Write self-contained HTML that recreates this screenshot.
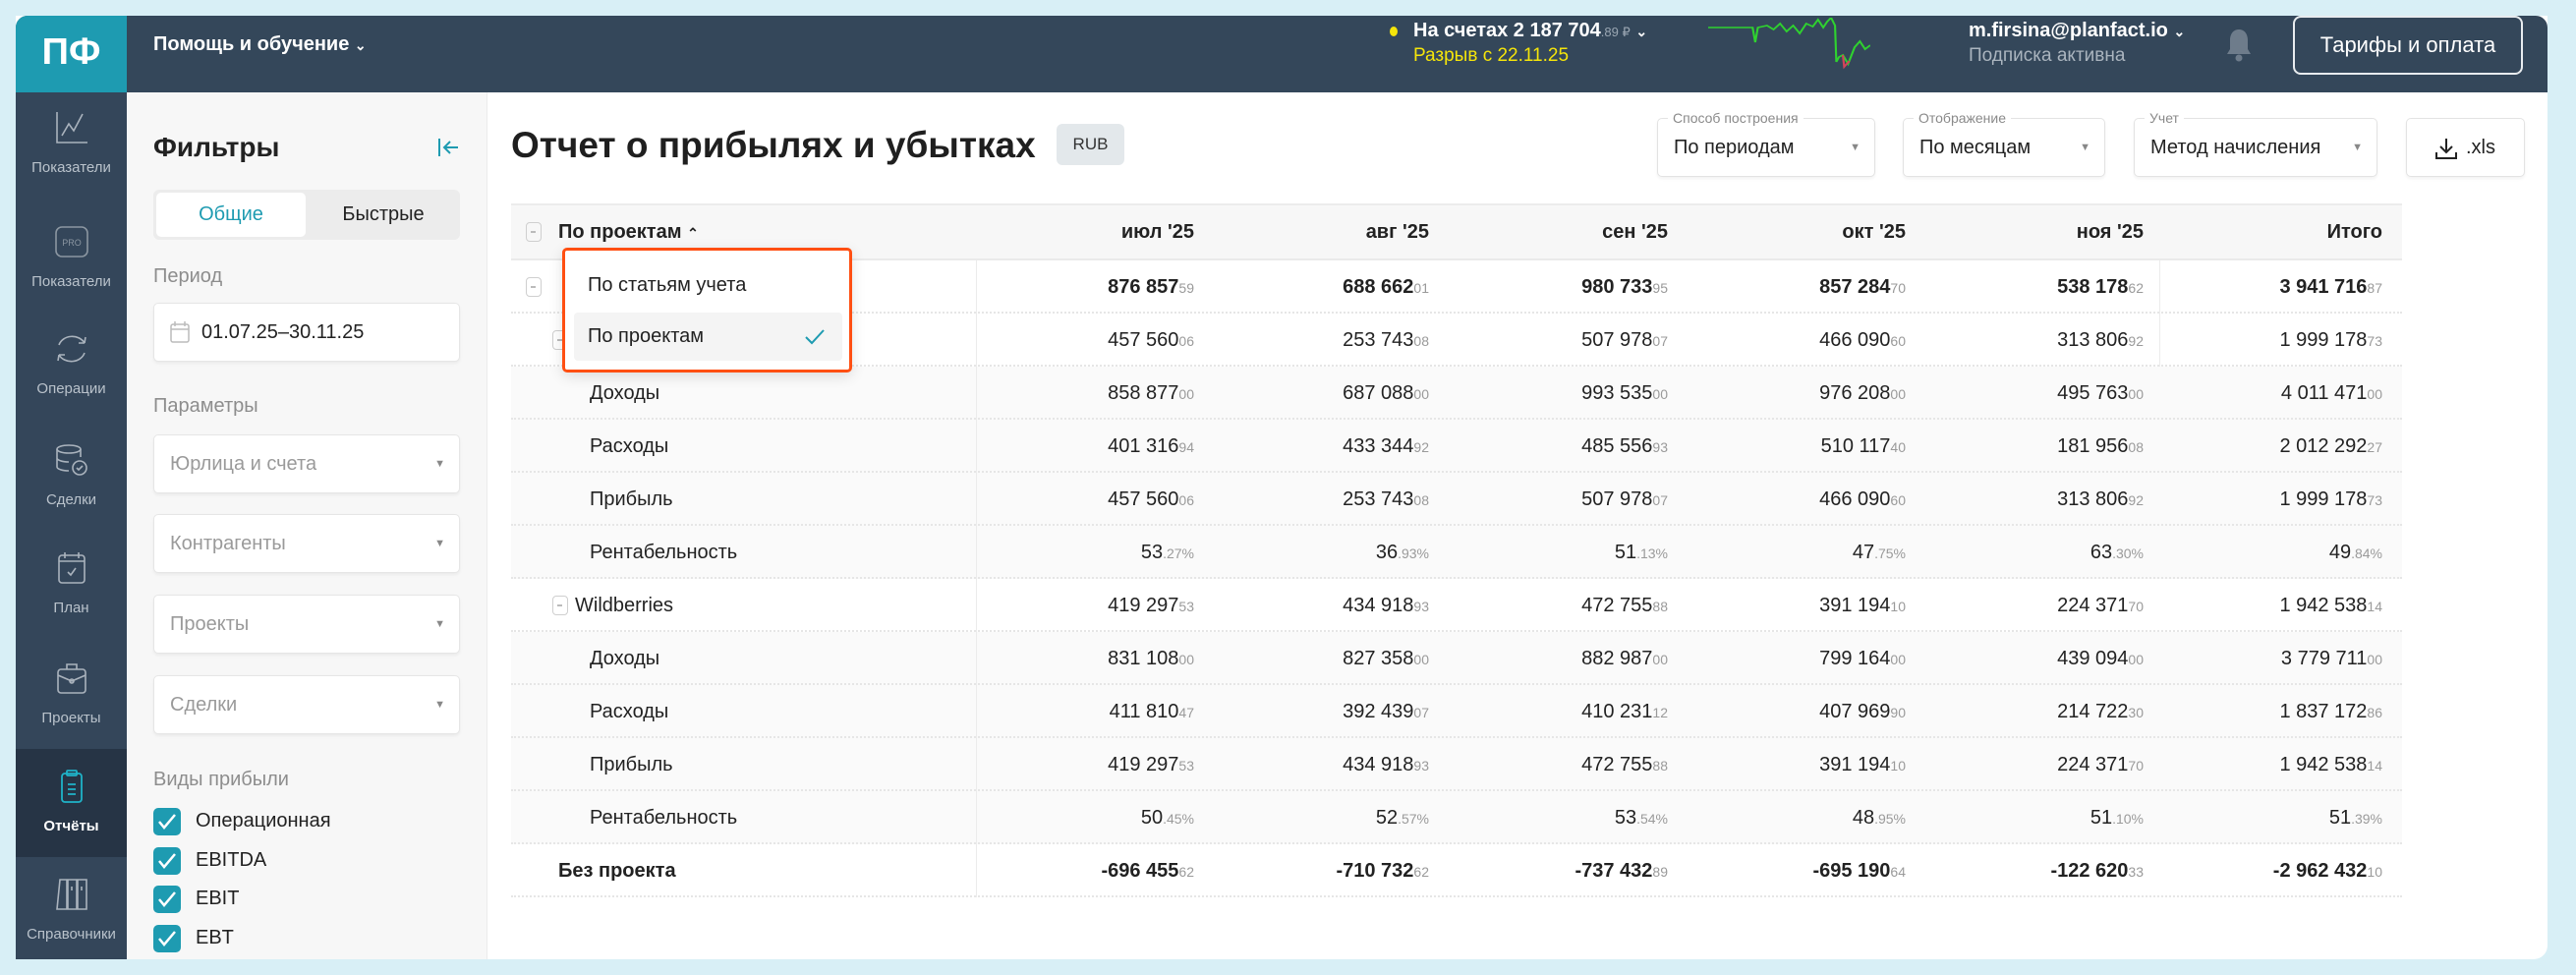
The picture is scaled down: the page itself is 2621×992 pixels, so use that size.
<!DOCTYPE html>
<html><head><meta charset="utf-8"><style>
*{box-sizing:border-box;margin:0;padding:0}
body{width:2621px;height:992px;background:#d8eff6;font-family:"Liberation Sans","Noto Sans CJK SC",sans-serif;color:#222;position:relative;overflow:hidden}
.abs{position:absolute}
#app{position:absolute;left:16px;top:16px;width:2576px;height:960px;background:#fff;border-radius:0 0 14px 14px;overflow:hidden}
#hdr{position:absolute;left:16px;top:16px;width:2576px;height:78px;background:#34475a;border-radius:12px 12px 0 0}
#logo{position:absolute;left:16px;top:16px;width:113px;height:78px;background:#1e9bb1;color:#fff;font-size:38px;font-weight:bold;text-align:center;line-height:74px;border-radius:12px 0 0 0}
#side{position:absolute;left:16px;top:94px;width:113px;height:882px;background:#34465a}
.si{position:absolute;left:16px;width:113px;text-align:center;color:#b9c2cb;font-size:15px}
.si svg{display:block;margin:0 auto 14px}
#filt{position:absolute;left:129px;top:94px;width:367px;height:882px;background:#f7f7f7;border-right:1px solid #ececec}
.lbl{position:absolute;left:156px;color:#8d8d8d;font-size:20px}
.box{position:absolute;left:156px;width:312px;height:60px;background:#fff;border:1px solid #e6e6e6;border-radius:5px;box-shadow:0 2px 3px rgba(0,0,0,.05);font-size:20px;color:#9a9a9a;line-height:58px;padding-left:16px}
.box .ar{position:absolute;right:14px;top:0;font-size:11px;color:#888}
.cb{position:absolute;left:156px;width:28px;height:28px;background:#1e9bb1;border-radius:5px}
.cb svg{position:absolute;left:4px;top:5px}
.cbl{position:absolute;left:199px;font-size:20px;color:#222}
.dd{position:absolute;top:120px;height:60px;border:1px solid #e3e3e3;border-radius:5px;background:#fff;font-size:20px;color:#222;line-height:58px;padding-left:16px;box-shadow:0 2px 3px rgba(0,0,0,.05)}
.dd .t{position:absolute;top:-10px;left:10px;background:#fff;padding:0 5px;font-size:14px;color:#8a8a8a;line-height:18px}
.dd .ar{position:absolute;right:14px;top:0;font-size:11px;color:#888}
#tbl{position:absolute;left:520px;top:207px;width:1924px}
.row{position:absolute;left:0;width:1924px;height:54px;border-bottom:2px dotted #e6e6e6;font-size:20px;line-height:54px}
.g{background:#fafafa}
.c{position:absolute;top:0;white-space:nowrap}
.c1{right:1229px}.c2{right:990px}.c3{right:747px}.c4{right:505px}.c5{right:263px}.c6{right:20px}
.c small{font-size:14px;color:#9a9a9a;font-weight:normal}
.b .c,.b .lb{font-weight:bold}
.lb{position:absolute;top:0}
.mk{position:absolute;width:16px;height:20px;border:1.5px solid #cfcfcf;border-radius:4px;top:17px}
.mk:after{content:"";position:absolute;left:4px;top:8px;width:5px;height:1.5px;background:#bbb}
</style></head><body>
<div id="app"></div>
<div id="hdr"></div>
<div id="logo">ПФ</div>
<div class="abs" style="left:156px;top:34px;color:#fff;font-size:20px;font-weight:bold">Помощь и обучение <span style="font-size:14px">&#8964;</span></div>
<div class="abs" style="left:1414px;top:27px;width:8px;height:10px;border-radius:50%;background:#f5e50a"></div>
<div class="abs" style="left:1438px;top:20px;color:#fff;font-size:20px;font-weight:bold">На счетах 2 187 704<span style="font-size:13px;color:#9aa6b2;font-weight:normal">.89 ₽</span> <span style="font-size:14px">&#8964;</span></div>
<div class="abs" style="left:1438px;top:46px;color:#f5e50a;font-size:19px">Разрыв с 22.11.25</div>
<svg class="abs" style="left:1738px;top:18px" width="165" height="60" viewBox="0 0 124 60" preserveAspectRatio="none"><polyline fill="none" stroke="#2fd22f" stroke-width="1.6" points="0,10 34,10 36,25 38,10 45,8 50,12 55,6 60,14 65,8 70,16 75,6 80,9 84,2 88,10 91,4 94,0 97,8 98,45 100,40 103,38 107,47 112,30 116,24 120,32 124,28"/><polyline fill="none" stroke="#d2455a" stroke-width="1.6" points="103,38 104,50 108,44"/></svg>
<div class="abs" style="left:2003px;top:20px;color:#fff;font-size:20px;font-weight:bold">m.firsina@planfact.io <span style="font-size:14px">&#8964;</span></div>
<div class="abs" style="left:2003px;top:46px;color:#aab4be;font-size:19px">Подписка активна</div>
<svg class="abs" style="left:2264px;top:28px" width="28" height="36" viewBox="0 0 28 36"><path d="M14 2c-6 0-9 5-9 11v9l-3 5h24l-3-5v-9c0-6-3-11-9-11z" fill="#6e7c8b"/><circle cx="14" cy="31" r="3.5" fill="#6e7c8b"/></svg>
<div class="abs" style="left:2333px;top:16px;width:234px;height:60px;border:2px solid #e8ecef;border-radius:8px;color:#fff;font-size:22px;text-align:center;line-height:56px">Тарифы и оплата</div>

<div id="side"></div>
<div class="si" style="top:112px"><svg width="36" height="36" viewBox="0 0 36 36" fill="none" stroke="#aab3bd" stroke-width="1.6"><path d="M3 2v31h31M8 26l7-12 5 7 9-17"/></svg>Показатели</div>
<div class="si" style="top:228px"><svg width="38" height="36" viewBox="0 0 38 36" fill="none" stroke="#8b96a1" stroke-width="1.6"><rect x="3" y="3" width="32" height="30" rx="6"/><text x="19" y="22" font-size="9" fill="#8b96a1" stroke="none" text-anchor="middle" font-family="Liberation Sans">PRO</text></svg>Показатели</div>
<div class="si" style="top:337px"><svg width="36" height="36" viewBox="0 0 36 36" fill="none" stroke="#aab3bd" stroke-width="1.6"><path d="M5 14a14 12 0 0 1 26-2M31 12l1-6M31 12l-6 0M31 22a14 12 0 0 1-26 2M5 24l-1 6M5 24l6 0"/></svg>Операции</div>
<div class="si" style="top:450px"><svg width="36" height="36" viewBox="0 0 36 36" fill="none" stroke="#aab3bd" stroke-width="1.6"><ellipse cx="15" cy="7" rx="12" ry="4"/><path d="M3 7v18c0 2 5 4 12 4M3 16c0 2 5 4 12 4M27 7v8"/><circle cx="26" cy="26" r="7"/><path d="M23 26l2 2 4-4"/></svg>Сделки</div>
<div class="si" style="top:560px"><svg width="36" height="36" viewBox="0 0 36 36" fill="none" stroke="#aab3bd" stroke-width="1.6"><rect x="5" y="5" width="26" height="28" rx="3"/><path d="M5 11h26M11 2v6M25 2v6M14 22l3 3 5-7"/></svg>План</div>
<div class="si" style="top:672px"><svg width="36" height="36" viewBox="0 0 36 36" fill="none" stroke="#aab3bd" stroke-width="1.6"><rect x="4" y="9" width="28" height="24" rx="3"/><path d="M13 9V4h10v5M4 15l14 6 14-6"/><circle cx="18" cy="21" r="2"/></svg>Проекты</div>
<div class="abs" style="left:16px;top:762px;width:113px;height:110px;background:#263445"></div>
<div class="si" style="top:782px;color:#fff;font-weight:bold"><svg width="36" height="36" viewBox="0 0 36 36" fill="none" stroke="#1fb3c8" stroke-width="1.8"><rect x="8" y="5" width="20" height="29" rx="3"/><rect x="13" y="2" width="10" height="5" rx="1"/><path d="M14 16h8M14 21h8M14 26h8"/></svg>Отчёты</div>
<div class="si" style="top:892px"><svg width="36" height="36" viewBox="0 0 36 36" fill="none" stroke="#aab3bd" stroke-width="1.6"><path d="M6 3h7v30H3zM14 3h9v30h-9zM24 3h9v30h-9zM18 10v4M28 10v4"/></svg>Справочники</div>

<div id="filt"></div>
<div class="abs" style="left:156px;top:134px;font-size:28px;font-weight:bold">Фильтры</div>
<svg class="abs" style="left:444px;top:138px" width="24" height="24" viewBox="0 0 24 24" fill="none" stroke="#1e9bb1" stroke-width="2"><path d="M3 3v18M22 12H8M14 6l-6 6 6 6"/></svg>
<div class="abs" style="left:156px;top:193px;width:312px;height:51px;background:#ececec;border-radius:6px"></div>
<div class="abs" style="left:159px;top:196px;width:152px;height:45px;background:#fff;border-radius:5px;color:#1e9bb1;font-size:20px;text-align:center;line-height:45px">Общие</div>
<div class="abs" style="left:315px;top:196px;width:150px;height:45px;font-size:20px;text-align:center;line-height:45px">Быстрые</div>
<div class="lbl" style="top:270px">Период</div>
<div class="box" style="top:308px;color:#222;padding-left:48px"><svg class="abs" style="left:16px;top:18px" width="20" height="22" viewBox="0 0 20 22" fill="none" stroke="#bbb" stroke-width="1.5"><rect x="1" y="3" width="18" height="18" rx="2"/><path d="M1 8h18M5 0v5M15 0v5"/></svg>01.07.25–30.11.25</div>
<div class="lbl" style="top:402px">Параметры</div>
<div class="box" style="top:442px">Юрлица и счета<span class="ar">▼</span></div>
<div class="box" style="top:523px">Контрагенты<span class="ar">▼</span></div>
<div class="box" style="top:605px">Проекты<span class="ar">▼</span></div>
<div class="box" style="top:687px">Сделки<span class="ar">▼</span></div>
<div class="lbl" style="top:782px">Виды прибыли</div>
<div class="cb" style="top:822px"><svg width="20" height="18" viewBox="0 0 20 18" fill="none" stroke="#fff" stroke-width="2.5"><path d="M2 9l5 6L18 2"/></svg></div><div class="cbl" style="top:824px">Операционная</div>
<div class="cb" style="top:862px"><svg width="20" height="18" viewBox="0 0 20 18" fill="none" stroke="#fff" stroke-width="2.5"><path d="M2 9l5 6L18 2"/></svg></div><div class="cbl" style="top:864px">EBITDA</div>
<div class="cb" style="top:901px"><svg width="20" height="18" viewBox="0 0 20 18" fill="none" stroke="#fff" stroke-width="2.5"><path d="M2 9l5 6L18 2"/></svg></div><div class="cbl" style="top:903px">EBIT</div>
<div class="cb" style="top:941px"><svg width="20" height="18" viewBox="0 0 20 18" fill="none" stroke="#fff" stroke-width="2.5"><path d="M2 9l5 6L18 2"/></svg></div><div class="cbl" style="top:943px">EBT</div>

<div class="abs" style="left:520px;top:127px;font-size:37px;font-weight:bold;color:#1f1f1f">Отчет о прибылях и убытках</div>
<div class="abs" style="left:1075px;top:126px;width:69px;height:42px;background:#e3e8eb;border-radius:6px;font-size:17px;text-align:center;line-height:42px;color:#333">RUB</div>

<div class="dd" style="left:1686px;width:222px"><span class="t">Способ построения</span>По периодам<span class="ar">▼</span></div>
<div class="dd" style="left:1936px;width:206px"><span class="t">Отображение</span>По месяцам<span class="ar">▼</span></div>
<div class="dd" style="left:2171px;width:248px"><span class="t">Учет</span>Метод начисления<span class="ar">▼</span></div>
<div class="dd" style="left:2448px;width:121px;padding-left:60px"><svg class="abs" style="left:28px;top:18px" width="24" height="24" viewBox="0 0 24 24" fill="none" stroke="#222" stroke-width="2"><path d="M12 2v14M6 10l6 6 6-6M2 16v6h20v-6"/></svg>.xls</div>

<div id="tbl">
<div class="row" style="top:0;height:58px;background:#f7f7f7;border-top:2px solid #ececec;border-bottom:2px solid #eaeaea;font-weight:bold;line-height:54px">
<span class="mk" style="left:15px"></span><span class="lb" style="left:48px">По проектам <span style="font-size:14px">&#8963;</span></span>
<span class="c c1">июл '25</span><span class="c c2">авг '25</span><span class="c c3">сен '25</span><span class="c c4">окт '25</span><span class="c c5">ноя '25</span><span class="c c6">Итого</span></div>

<div class="row b" style="top:58px"><span class="mk" style="left:15px"></span>
<span class="c c1">876 857<small>59</small></span><span class="c c2">688 662<small>01</small></span><span class="c c3">980 733<small>95</small></span><span class="c c4">857 284<small>70</small></span><span class="c c5">538 178<small>62</small></span><span class="c c6">3 941 716<small>87</small></span></div>
<div class="row" style="top:112px"><span class="mk" style="left:42px"></span>
<span class="c c1">457 560<small>06</small></span><span class="c c2">253 743<small>08</small></span><span class="c c3">507 978<small>07</small></span><span class="c c4">466 090<small>60</small></span><span class="c c5">313 806<small>92</small></span><span class="c c6">1 999 178<small>73</small></span></div>
<div class="row g" style="top:166px"><span class="lb" style="left:80px">Доходы</span>
<span class="c c1">858 877<small>00</small></span><span class="c c2">687 088<small>00</small></span><span class="c c3">993 535<small>00</small></span><span class="c c4">976 208<small>00</small></span><span class="c c5">495 763<small>00</small></span><span class="c c6">4 011 471<small>00</small></span></div>
<div class="row g" style="top:220px"><span class="lb" style="left:80px">Расходы</span>
<span class="c c1">401 316<small>94</small></span><span class="c c2">433 344<small>92</small></span><span class="c c3">485 556<small>93</small></span><span class="c c4">510 117<small>40</small></span><span class="c c5">181 956<small>08</small></span><span class="c c6">2 012 292<small>27</small></span></div>
<div class="row g" style="top:274px"><span class="lb" style="left:80px">Прибыль</span>
<span class="c c1">457 560<small>06</small></span><span class="c c2">253 743<small>08</small></span><span class="c c3">507 978<small>07</small></span><span class="c c4">466 090<small>60</small></span><span class="c c5">313 806<small>92</small></span><span class="c c6">1 999 178<small>73</small></span></div>
<div class="row g" style="top:328px"><span class="lb" style="left:80px">Рентабельность</span>
<span class="c c1">53<small>.27%</small></span><span class="c c2">36<small>.93%</small></span><span class="c c3">51<small>.13%</small></span><span class="c c4">47<small>.75%</small></span><span class="c c5">63<small>.30%</small></span><span class="c c6">49<small>.84%</small></span></div>
<div class="row" style="top:382px"><span class="mk" style="left:42px"></span><span class="lb" style="left:65px">Wildberries</span>
<span class="c c1">419 297<small>53</small></span><span class="c c2">434 918<small>93</small></span><span class="c c3">472 755<small>88</small></span><span class="c c4">391 194<small>10</small></span><span class="c c5">224 371<small>70</small></span><span class="c c6">1 942 538<small>14</small></span></div>
<div class="row g" style="top:436px"><span class="lb" style="left:80px">Доходы</span>
<span class="c c1">831 108<small>00</small></span><span class="c c2">827 358<small>00</small></span><span class="c c3">882 987<small>00</small></span><span class="c c4">799 164<small>00</small></span><span class="c c5">439 094<small>00</small></span><span class="c c6">3 779 711<small>00</small></span></div>
<div class="row g" style="top:490px"><span class="lb" style="left:80px">Расходы</span>
<span class="c c1">411 810<small>47</small></span><span class="c c2">392 439<small>07</small></span><span class="c c3">410 231<small>12</small></span><span class="c c4">407 969<small>90</small></span><span class="c c5">214 722<small>30</small></span><span class="c c6">1 837 172<small>86</small></span></div>
<div class="row g" style="top:544px"><span class="lb" style="left:80px">Прибыль</span>
<span class="c c1">419 297<small>53</small></span><span class="c c2">434 918<small>93</small></span><span class="c c3">472 755<small>88</small></span><span class="c c4">391 194<small>10</small></span><span class="c c5">224 371<small>70</small></span><span class="c c6">1 942 538<small>14</small></span></div>
<div class="row g" style="top:598px"><span class="lb" style="left:80px">Рентабельность</span>
<span class="c c1">50<small>.45%</small></span><span class="c c2">52<small>.57%</small></span><span class="c c3">53<small>.54%</small></span><span class="c c4">48<small>.95%</small></span><span class="c c5">51<small>.10%</small></span><span class="c c6">51<small>.39%</small></span></div>
<div class="row b" style="top:652px"><span class="lb" style="left:48px">Без проекта</span>
<span class="c c1">-696 455<small>62</small></span><span class="c c2">-710 732<small>62</small></span><span class="c c3">-737 432<small>89</small></span><span class="c c4">-695 190<small>64</small></span><span class="c c5">-122 620<small>33</small></span><span class="c c6">-2 962 432<small>10</small></span></div>
<div class="abs" style="left:473px;top:58px;width:1px;height:648px;background:#ececec"></div>
<div class="abs" style="left:1677px;top:58px;width:1px;height:108px;background:#ececec"></div>
</div>

<div class="abs" style="left:572px;top:252px;width:295px;height:127px;background:#fff;border:3px solid #ff4f12;border-radius:5px;box-shadow:0 4px 14px rgba(0,0,0,.12)"></div>
<div class="abs" style="left:598px;top:279px;font-size:20px">По статьям учета</div>
<div class="abs" style="left:584px;top:318px;width:273px;height:49px;background:#f4f4f4;border-radius:4px"></div>
<div class="abs" style="left:598px;top:331px;font-size:20px">По проектам</div>
<svg class="abs" style="left:818px;top:334px" width="22" height="18" viewBox="0 0 22 18" fill="none" stroke="#1e9bb1" stroke-width="2"><path d="M2 9l6 6L20 2"/></svg>
</body></html>
